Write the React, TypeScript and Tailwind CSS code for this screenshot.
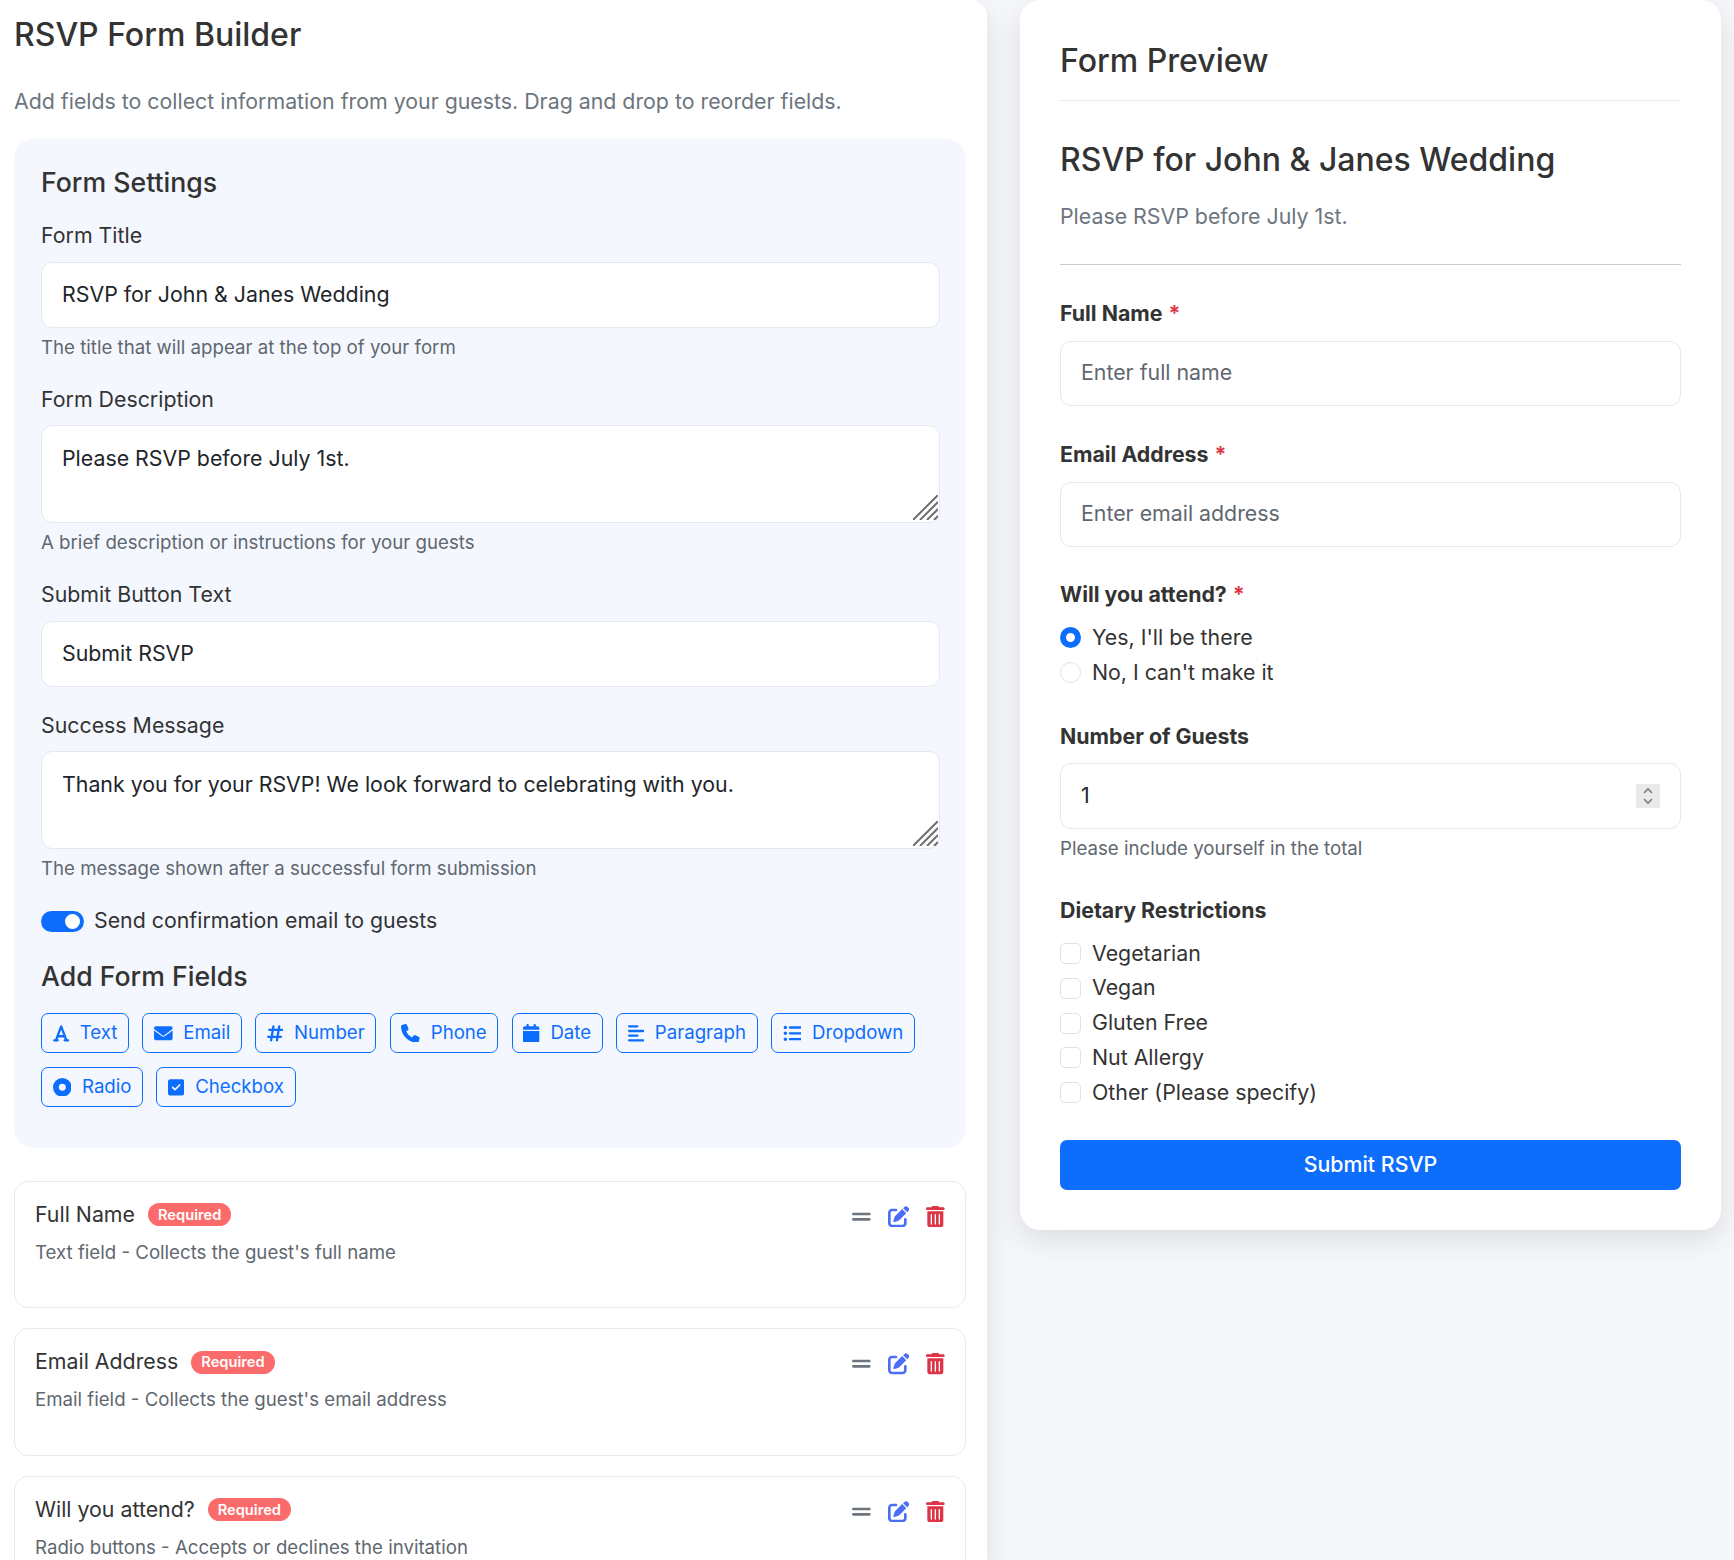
import * as React from "react";
import {
  FaFont,
  FaEnvelope,
  FaHashtag,
  FaPhone,
  FaCalendar,
  FaAlignLeft,
  FaListUl,
  FaCircleDot,
  FaSquareCheck,
  FaGripLines,
  FaPenToSquare,
  FaTrashCan,
} from "react-icons/fa6";

const fieldButtons = [
  [
    { icon: FaFont, label: "Text", size: "w-[16.33px]" },
    { icon: FaEnvelope, label: "Email", size: "w-[18.67px]" },
    { icon: FaHashtag, label: "Number", size: "w-[16.33px]" },
    { icon: FaPhone, label: "Phone", size: "w-[18.67px]" },
    { icon: FaCalendar, label: "Date", size: "w-[16.33px]" },
    { icon: FaAlignLeft, label: "Paragraph", size: "w-[16.33px]" },
    { icon: FaListUl, label: "Dropdown", size: "w-[18.67px]" },
  ],
  [
    { icon: FaCircleDot, label: "Radio", size: "w-[18.67px]" },
    { icon: FaSquareCheck, label: "Checkbox", size: "w-[16.33px]" },
  ],
];

const fields = [
  { name: "Full Name", desc: "Text field - Collects the guest's full name" },
  { name: "Email Address", desc: "Email field - Collects the guest's email address" },
  { name: "Will you attend?", desc: "Radio buttons - Accepts or declines the invitation" },
];

function ResizeHandle() {
  return (
    <svg className="absolute right-[1px] bottom-[2px]" width="25" height="25" viewBox="0 0 25 25">
      <path d="M0 25 L25 0 M7 25 L25 7 M14 25 L25 14 M21 25 L25 21" stroke="#6f6f6f" strokeWidth="2" fill="none" />
    </svg>
  );
}

function SettingInput({ label, value, hint }: { label: string; value: string; hint: string }) {
  return (
    <div className={hint ? "" : "mb-[-1px]"}>
      <div className="h-[27px] text-[21.33px] leading-[27px] text-[#333]">{label}</div>
      <div className="mt-[13.3px] flex h-[66px] items-center rounded-[11px] border border-[#e6e8ef] bg-white pl-[20px] text-[21.33px] text-[#212529]">
        {value}
      </div>
      {hint && <div className="mt-[8px] h-[24px] text-[18.67px] leading-[24px] text-[#5f6770]">{hint}</div>}
    </div>
  );
}

function SettingTextarea({ label, value, hint }: { label: string; value: string; hint: string }) {
  return (
    <div>
      <div className="h-[27px] text-[21.33px] leading-[27px] text-[#333]">{label}</div>
      <div className="relative mt-[12.5px] h-[98px] rounded-[11px] border border-[#e6e8ef] bg-white pt-[16px] pl-[20px] text-[21.33px] leading-[32px] text-[#212529]">
        {value}
        <ResizeHandle />
      </div>
      <div className="mt-[8px] h-[24px] text-[18.67px] leading-[24px] text-[#5f6770]">{hint}</div>
    </div>
  );
}

function FieldCard({ name, desc }: { name: string; desc: string }) {
  return (
    <div className="flex h-[127.5px] items-start justify-between rounded-[14px] border border-[#e8eaef] bg-white pt-[20px] pr-[20px] pl-[20px]">
      <div>
        <div className="flex h-[26px] items-center gap-[13px]">
          <span className="text-[21.33px] text-[#333]">{name}</span>
          <span className="flex h-[23px] items-center rounded-full bg-[#fb6b6b] px-[10px] text-[14.67px] font-semibold text-white">
            Required
          </span>
        </div>
        <div className="mt-[13px] text-[18.67px] leading-[24px] text-[#5f6770]">{desc}</div>
      </div>
      <div className="mt-[4px] flex h-[22px] items-center gap-[17px]">
        <FaGripLines className="h-[21.33px] w-[18.67px] text-[#6c757d]" />
        <FaPenToSquare className="h-[21.33px] w-[21.33px] text-[#4c6ef5]" />
        <FaTrashCan className="h-[21.33px] w-[18.67px] text-[#dc3545]" />
      </div>
    </div>
  );
}

function PreviewLabel({ text, required }: { text: string; required?: boolean }) {
  return (
    <div className="h-[27px] text-[21.33px] leading-[27px] font-bold text-[#333]">
      {text}
      {required && <span className="ml-[6px] text-[#dc3545]">*</span>}
    </div>
  );
}

function PreviewInput({ text }: { text: string }) {
  return (
    <div className="mt-[13.5px] flex h-[65.5px] items-center rounded-[11px] border border-[#e6e8ef] bg-white pl-[20px] text-[21.33px] text-[#5f6770]">
      {text}
    </div>
  );
}

function Check({ label }: { label: string }) {
  return (
    <div className="flex h-[27px] items-center gap-[11px] text-[21.33px] text-[#333]">
      <span className="h-[21px] w-[21px] rounded-[5px] border border-[#dfe2e8] bg-white" />
      {label}
    </div>
  );
}

export default function App() {
  return (
    <div
      className="flex h-[1560px] w-[1734px] items-start gap-[33px] overflow-hidden bg-[#f5f7fb]"
      style={{ fontFamily: "Inter, 'Noto Sans', sans-serif" }}
    >
      {/* Builder column */}
      <div className="h-[1560px] w-[987px] shrink-0 rounded-tr-[16px] bg-white pr-[21px] pl-[14px] shadow-[0_10px_30px_rgba(0,0,0,0.11)]">
        <h1 className="pt-[15px] text-[32px] leading-[40px] font-medium text-[#333]">RSVP Form Builder</h1>
        <p className="mt-[32px] text-[21.33px] leading-[28px] text-[#6c757d]">
          Add fields to collect information from your guests. Drag and drop to reorder fields.
        </p>

        <div className="mt-[24px] flex h-[1008.5px] flex-col rounded-[20px] bg-[#f4f7fe] pt-[24.5px] pr-[26px] pl-[27px]">
          <h2 className="text-[26.67px] leading-[36px] font-medium text-[#333]">Form Settings</h2>
          <div className="mt-[22.7px] flex flex-col gap-[25.5px]">
            <SettingInput label="Form Title" value="RSVP for John & Janes Wedding" hint="The title that will appear at the top of your form" />
            <SettingTextarea label="Form Description" value="Please RSVP before July 1st." hint="A brief description or instructions for your guests" />
            <SettingInput label="Submit Button Text" value="Submit RSVP" hint="" />
            <SettingTextarea label="Success Message" value="Thank you for your RSVP! We look forward to celebrating with you." hint="The message shown after a successful form submission" />
          </div>
          <div className="mt-[26px] flex h-[28px] items-center gap-[10px] text-[21.33px] text-[#333]">
            <span className="flex h-[21px] w-[43px] items-center justify-end rounded-full bg-[#0d6efd] pr-[4px]">
              <span className="h-[15px] w-[15px] rounded-full bg-white" />
            </span>
            Send confirmation email to guests
          </div>
          <h2 className="mt-[22.7px] text-[26.67px] leading-[36px] font-medium text-[#333]">Add Form Fields</h2>
          <div className="mt-[19.3px] flex flex-col gap-[14.3px]">
            {fieldButtons.map((row, i) => (
              <div key={i} className="flex gap-[13.33px]">
                {row.map(({ icon: Icon, label, size }) => (
                  <div
                    key={label}
                    className="flex h-[39.7px] items-center gap-[10.67px] rounded-[7px] border border-[#0d6efd] px-[10.67px] text-[18.67px] text-[#0d6efd]"
                  >
                    <Icon className={`h-[18.67px] shrink-0 ${size}`} />
                    {label}
                  </div>
                ))}
              </div>
            ))}
          </div>
        </div>

        <div className="mt-[33px] flex flex-col gap-[20px]">
          {fields.map((f) => (
            <FieldCard key={f.name} name={f.name} desc={f.desc} />
          ))}
        </div>
      </div>

      {/* Preview column */}
      <div className="w-[701px] shrink-0 rounded-[20px] bg-white px-[40px] shadow-[0_10px_30px_rgba(0,0,0,0.11)]">
        <h2 className="flex h-[100px] items-center pt-[22px] text-[32px] font-medium text-[#333]">
          Form Preview
        </h2>
        <div className="h-px bg-[#e9ecef]" />
        <h3 className="mt-[39px] text-[32px] leading-[40px] font-medium text-[#333]">
          RSVP for John &amp; Janes Wedding
        </h3>
        <p className="mt-[22px] h-[28px] text-[21.33px] leading-[28px] text-[#6c757d]">Please RSVP before July 1st.</p>
        <div className="mt-[34px] h-px bg-[#c9cdd2]" />

        <div className="mt-[35px]">
          <PreviewLabel text="Full Name" required />
          <PreviewInput text="Enter full name" />
        </div>
        <div className="mt-[35px]">
          <PreviewLabel text="Email Address" required />
          <PreviewInput text="Enter email address" />
        </div>
        <div className="mt-[34px]">
          <PreviewLabel text="Will you attend?" required />
          <div className="mt-[16px] flex h-[27px] items-center gap-[11px] text-[21.33px] text-[#333]">
            <span className="h-[21px] w-[21px] rounded-full border-[6px] border-[#0d6efd] bg-white" />
            Yes, I'll be there
          </div>
          <div className="mt-[8px] flex h-[27px] items-center gap-[11px] text-[21.33px] text-[#333]">
            <span className="h-[21px] w-[21px] rounded-full border border-[#dfe2e8] bg-white" />
            No, I can't make it
          </div>
        </div>
        <div className="mt-[37px]">
          <PreviewLabel text="Number of Guests" />
          <div className="mt-[13px] flex h-[66px] items-center justify-between rounded-[11px] border border-[#e6e8ef] bg-white pr-[20px] pl-[20px] text-[21.33px] text-[#212529]">
            1
            <svg width="24" height="24" viewBox="0 0 24 24" className="bg-[#e9eaec]">
              <path d="M8 9 L12 5 L16 9 M8 15 L12 19 L16 15" stroke="#7b7f84" strokeWidth="1.6" fill="none" />
            </svg>
          </div>
          <div className="mt-[8px] h-[24px] text-[18.67px] leading-[24px] text-[#5f6770]">Please include yourself in the total</div>
        </div>
        <div className="mt-[36px]">
          <PreviewLabel text="Dietary Restrictions" />
          <div className="mt-[16px] flex flex-col gap-[7.75px]">
            {["Vegetarian", "Vegan", "Gluten Free", "Nut Allergy", "Other (Please specify)"].map((c) => (
              <Check key={c} label={c} />
            ))}
          </div>
        </div>
        <div className="mt-[34px] flex h-[50px] items-center justify-center rounded-[7px] bg-[#0d6efd] text-[21.33px] font-medium text-white">
          Submit RSVP
        </div>
        <div className="h-[40px]" />
      </div>
    </div>
  );
}
